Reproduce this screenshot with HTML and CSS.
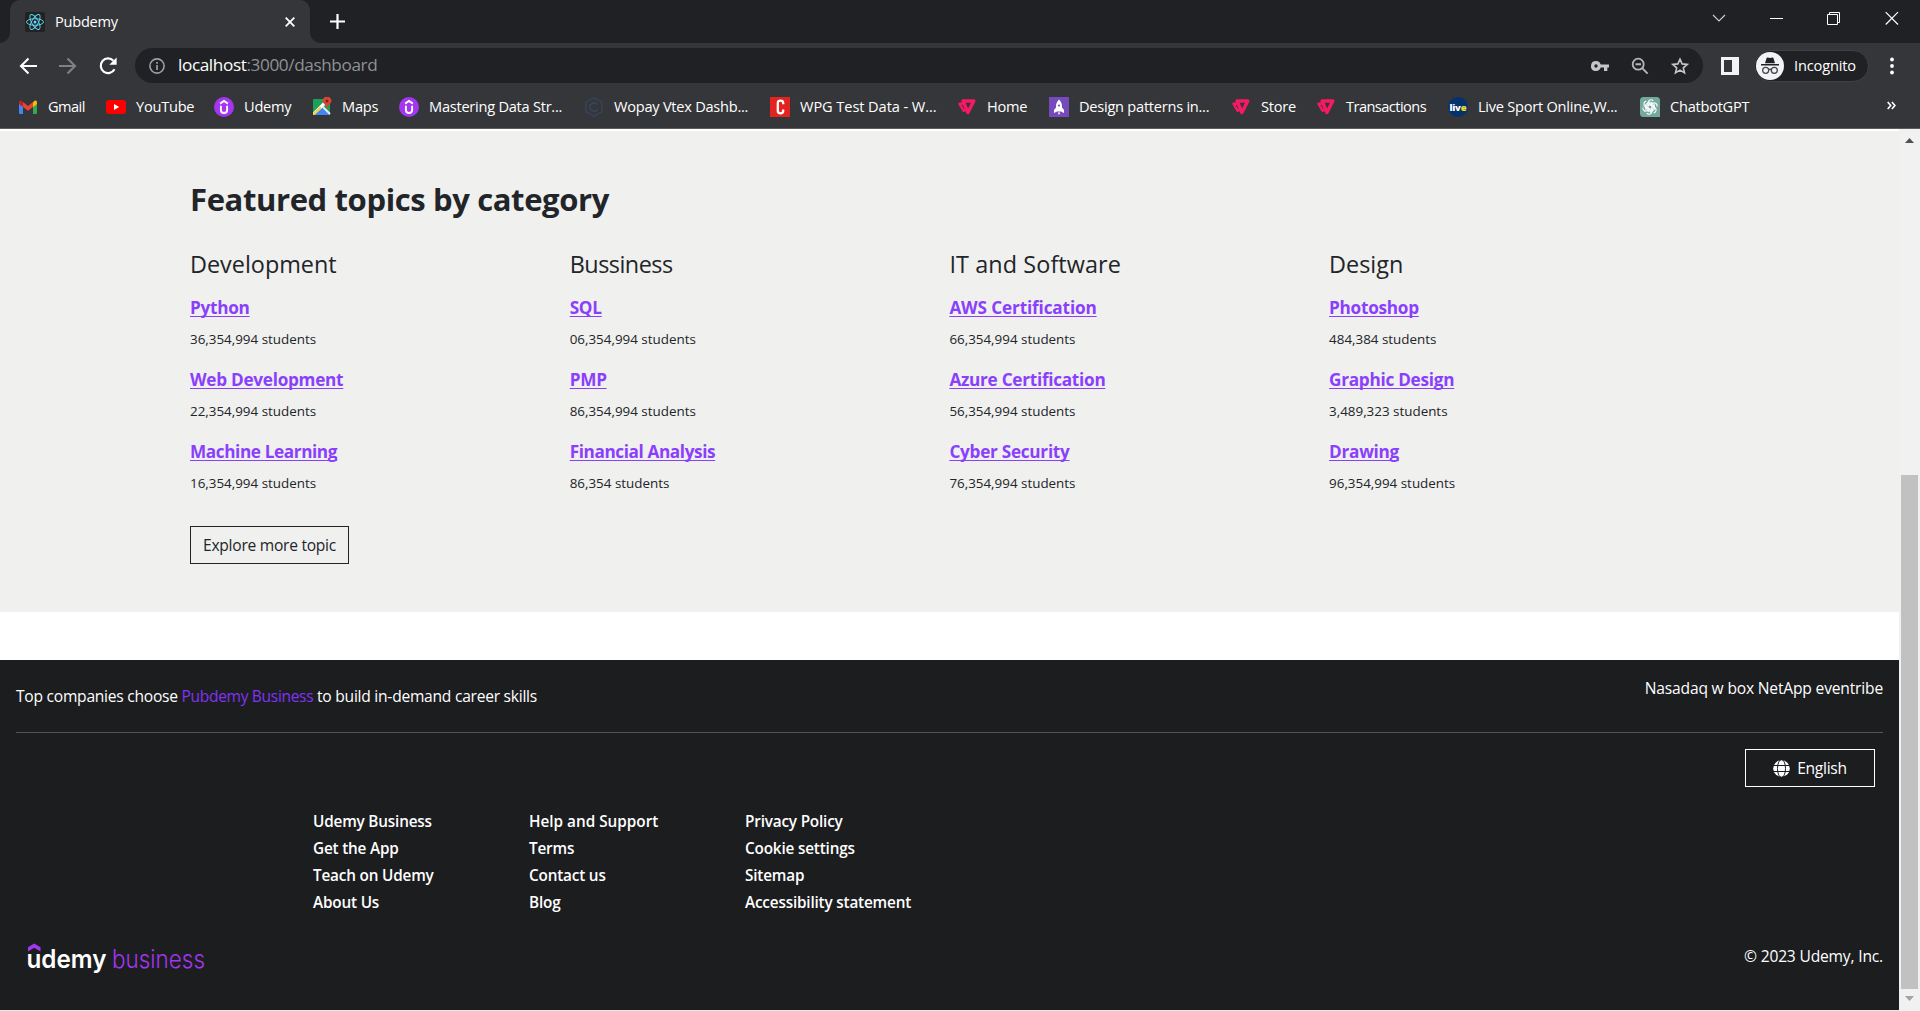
FILE: index.html
```
<!DOCTYPE html>
<html lang="en">
<head>
<meta charset="utf-8">
<title>Pubdemy</title>
<link rel="stylesheet" href="styles.css">
</head>
<body>
<svg class="defs" width="0" height="0">
  <symbol id="udemy" viewBox="0 0 20 20"><circle cx="10" cy="10" r="10" fill="#a435f0"/><path d="M6.100 6.600 10 4l3.900 2.600M6.900 8.800v4.100a3.100 3.100 0 0 0 6.200 0V8.800" fill="none" stroke="#fff" stroke-width="1.900"/></symbol>
  <symbol id="vtex" viewBox="0 0 20 20"><g fill="none" stroke="#f71963" stroke-linejoin="round" stroke-linecap="round"><path d="M6 4h10.800l-5.900 11.500z" stroke-width="3.400"/><path d="M5 6.800H2.500l4.200 7 1.500-.8" stroke-width="2.400"/></g></symbol>
</svg>

<header class="browser">
  <div class="tabstrip">
    <div class="tab">
      <svg class="favicon" viewBox="0 0 20 20"><rect width="20" height="20" rx="1.500" fill="#222"/><g fill="none" stroke="#61dafb" stroke-width=".9"><ellipse cx="10" cy="10" rx="8.500" ry="3.300"/><ellipse cx="10" cy="10" rx="8.500" ry="3.300" transform="rotate(60 10 10)"/><ellipse cx="10" cy="10" rx="8.500" ry="3.300" transform="rotate(120 10 10)"/></g><circle cx="10" cy="10" r="1.500" fill="#61dafb"/></svg>
      <span class="tab-title">Pubdemy</span>
      <svg class="tab-close" viewBox="0 0 10 10"><path d="M.7.7l8.600 8.600M9.300.7.7 9.300" stroke="#fff" stroke-width="1.800"/></svg>
    </div>
    <svg class="new-tab" viewBox="0 0 15 15"><path d="M7.500 0v15M0 7.500h15" stroke="#fff" stroke-width="2.200"/></svg>
    <div class="window-controls">
      <svg viewBox="0 0 14 14"><path d="M1 4l6 6 6-6" fill="none" stroke="#d0d0d1" stroke-width="1.100"/></svg>
      <svg viewBox="0 0 14 14"><path d="M0 7.500h13" stroke="#fff"/></svg>
      <svg viewBox="0 0 14 14"><path d="M.5 3.500h10v10H.5zM2.500 3.500v-2h10v10h-2" fill="none" stroke="#fff"/></svg>
      <svg viewBox="0 0 14 14"><path d="M.7 1.200l12.300 12.300M13 1.200.7 13.500" stroke="#fff" stroke-width="1.200"/></svg>
    </div>
  </div>

  <div class="toolbar">
    <div class="nav-buttons">
      <svg viewBox="0 0 20 20"><path d="M19 10H3M10.500 2.500 3 10l7.500 7.500" fill="none" stroke="#fff" stroke-width="2.100"/></svg>
      <svg viewBox="0 0 20 20"><path d="M1 10h16M9.500 2.500 17 10l-7.500 7.500" fill="none" stroke="#808184" stroke-width="2.100"/></svg>
      <svg viewBox="0 0 20 20"><path d="M16.500 13.200A7.300 7.300 0 1 1 15.400 4.800" fill="none" stroke="#fff" stroke-width="2.200"/><path d="M18.600 1.500v7.300h-7.300z" fill="#fff"/></svg>
    </div>
    <div class="omnibox">
      <svg class="info" viewBox="0 0 16 16"><circle cx="8" cy="8" r="7.100" fill="none" stroke="#9aa0a6" stroke-width="1.600"/><path d="M8 7v5M8 4v1.800" stroke="#9aa0a6" stroke-width="1.700"/></svg>
      <span class="url">localhost<span class="url-rest">:3000/dashboard</span></span>
      <div class="omni-actions">
        <svg viewBox="0 0 18 18"><path d="M5 4a5 5 0 1 0 4.700 6.600H13v3.300h3.300v-3.300H18V7.400H9.700A5 5 0 0 0 5 4Zm0 3.300a1.700 1.700 0 1 1 0 3.400 1.700 1.700 0 0 1 0-3.400Z" fill="#c4c5c7" fill-rule="evenodd"/></svg>
        <svg viewBox="0 0 18 18"><circle cx="7.200" cy="7.200" r="5.500" fill="none" stroke="#b5b6b8" stroke-width="1.800"/><path d="M4.500 7.200H10M11.200 11.200l5.400 5.400" stroke="#b5b6b8" stroke-width="1.900"/></svg>
        <svg viewBox="0 0 18 18"><path d="M9 2.200l2.100 4.700 5.100.5-3.900 3.400 1.200 5L9 13.100l-4.500 2.700 1.200-5-3.900-3.400 5.100-.5z" fill="none" stroke="#c4c5c7" stroke-width="1.600"/></svg>
      </div>
    </div>
    <svg class="side-panel" viewBox="0 0 18 18"><path d="M0 0h18v18H0zM3 3v12h8V3z" fill="#f1f3f4" fill-rule="evenodd"/></svg>
    <div class="profile">
      <svg viewBox="0 0 28 28"><circle cx="14" cy="14" r="14" fill="#f1f3f4"/><path d="M9 11.200 10.600 6q.4-.8 1.200-.5l2.200.5 2.200-.5q.8-.3 1.200.5L19 11.200zM5 12h18v1.500H5z" fill="#202124"/><g fill="none" stroke="#45474a" stroke-width="1.300"><circle cx="9.700" cy="18.300" r="3"/><circle cx="18.300" cy="18.300" r="3"/><path d="M12.500 17.700q1.500-.9 3 0"/></g></svg>
      <span>Incognito</span>
    </div>
    <svg class="menu-dots" viewBox="0 0 4 18"><g fill="#fff"><circle cx="2" cy="2.500" r="1.900"/><circle cx="2" cy="9" r="1.900"/><circle cx="2" cy="15.500" r="1.900"/></g></svg>
  </div>

  <nav class="bookmarks">
    <a class="tight"><svg viewBox="0 0 20 20"><path fill="#4285f4" d="M1 6l4 3v8H2.300Q1 17 1 15.700z"/><path fill="#34a853" d="M19 6l-4 3v8h2.700q1.300 0 1.300-1.300z"/><path fill="#fbbc04" d="M15 5.200 16.200 4Q19 2.600 19 5.500V7l-4 3z"/><path fill="#c5221f" d="M5 5.200 3.800 4Q1 2.600 1 5.500V7l4 3z"/><path fill="#ea4335" d="M5 5l5 4 5-4v5l-5 3.800L5 10z"/></svg>Gmail</a>
    <a><svg viewBox="0 0 20 20"><rect y="3" width="20" height="14" rx="3" fill="#f00"/><path d="M8 7l5.200 3L8 13z" fill="#fff"/></svg>YouTube</a>
    <a><svg><use href="#udemy"/></svg>Udemy</a>
    <a><svg viewBox="0 0 20 20"><rect x="1" y="2" width="17" height="16" rx="1" fill="#1da05a"/><path d="M1.500 18 10 9.500 18 17.500V18z" fill="#4285f4"/><path d="M1 15.500 14.500 2H18v1.500L2.500 18H1z" fill="#fff"/><path d="M1 16.500 8 9.500l1.500 1.500L2.500 18H1z" fill="#fbcf2b"/><path d="M10.500 9.500 18 17" stroke="#e8eaed" stroke-width="2"/><path d="M14.700 12Q14.400 8.500 12 6.700a4.200 4.200 0 1 1 6 0Q15.300 8.500 14.700 12z" fill="#db4437"/><circle cx="15" cy="4" r="1.500" fill="#7b231b"/></svg>Maps</a>
    <a><svg><use href="#udemy"/></svg>Mastering Data Str...</a>
    <a><svg viewBox="0 0 20 20"><g fill="none" stroke="#35445a" stroke-width="1.500"><path d="M10 .8 18 5.400v9.200l-8 4.600-8-4.600V5.400z"/><path d="M13.500 7.500a4.200 4.200 0 1 0 0 5" stroke-width="1.900"/></g></svg>Wopay Vtex Dashb...</a>
    <a class="loose"><svg viewBox="0 0 20 20"><rect width="20" height="20" fill="#e2231f"/><path d="M13.200 7.300V6q0-2.300-2.700-2.300T7.800 6v8q0 2.300 2.700 2.300T13.200 14v-1.500" fill="none" stroke="#fff" stroke-width="2.300"/></svg>WPG Test Data - W...</a>
    <a><svg><use href="#vtex"/></svg>Home</a>
    <a><svg viewBox="0 0 20 20"><rect width="20" height="20" fill="#764abc"/><path d="M10 2.500q3.300 3 3 8l2 2.500v3l-3-1.500H8L5 16v-3l2-2.500q-.3-5 3-8zM8.700 15.500h2.600L10 18z" fill="#fff"/><circle cx="10" cy="8.500" r="1.100" fill="#764abc"/></svg>Design patterns in...</a>
    <a><svg><use href="#vtex"/></svg>Store</a>
    <a class="tight"><svg><use href="#vtex"/></svg>Transactions</a>
    <a><svg viewBox="0 0 20 20"><circle cx="10" cy="10" r="10" fill="#05316f"/><text x="1.500" y="13.700" textLength="17" class="live">liv<tspan fill="#f5e11d">e</tspan></text></svg>Live Sport Online,W...</a>
    <a><svg viewBox="0 0 20 20"><path d="M3.500 0h13Q20 0 20 3.500V20H3.500Q0 20 0 16.500v-13Q0 0 3.500 0z" fill="#74aa9c"/><g fill="none" stroke="#fff" stroke-width="1.100"><path id="petal" d="M8 9V5.700a3 3 0 0 1 5.200-1.900"/><use href="#petal" transform="rotate(60 10 10)"/><use href="#petal" transform="rotate(120 10 10)"/><use href="#petal" transform="rotate(180 10 10)"/><use href="#petal" transform="rotate(240 10 10)"/><use href="#petal" transform="rotate(300 10 10)"/><path id="bar" d="M8 11.200V7.500l3.300-1.900 3.400 2"/><use href="#bar" transform="rotate(60 10 10)"/><use href="#bar" transform="rotate(120 10 10)"/><use href="#bar" transform="rotate(180 10 10)"/><use href="#bar" transform="rotate(240 10 10)"/><use href="#bar" transform="rotate(300 10 10)"/></g></svg>ChatbotGPT</a>
    <svg class="more" viewBox="0 0 9 9"><path d="M.7 1l3 3.500-3 3.500M4.900 1l3 3.500-3 3.500" fill="none" stroke="#fff" stroke-width="1.600"/></svg>
  </nav>
</header>

<div class="viewport">
  <div class="page">
    <section class="topics">
      <h1>Featured topics by category</h1>
      <div class="topic-columns">
        <div class="topic-column">
          <h2>Development</h2>
          <a>Python</a><p>36,354,994 students</p>
          <a>Web Development</a><p>22,354,994 students</p>
          <a class="snug-link">Machine Learning</a><p>16,354,994 students</p>
        </div>
        <div class="topic-column">
          <h2 class="snug">Bussiness</h2>
          <a>SQL</a><p>06,354,994 students</p>
          <a>PMP</a><p>86,354,994 students</p>
          <a class="snug-link">Financial Analysis</a><p>86,354 students</p>
        </div>
        <div class="topic-column">
          <h2 class="wide">IT and Software</h2>
          <a class="wide-link">AWS Certification</a><p>66,354,994 students</p>
          <a>Azure Certification</a><p>56,354,994 students</p>
          <a>Cyber Security</a><p>76,354,994 students</p>
        </div>
        <div class="topic-column">
          <h2>Design</h2>
          <a>Photoshop</a><p>484,384 students</p>
          <a>Graphic Design</a><p>3,489,323 students</p>
          <a>Drawing</a><p>96,354,994 students</p>
        </div>
      </div>
      <button class="explore">Explore more topic</button>
    </section>

    <footer class="footer">
      <div class="companies">
        <p class="pitch">Top companies choose <span>Pubdemy Business</span> to build in-demand career skills</p>
        <p class="partners">Nasadaq w box NetApp eventribe</p>
      </div>
      <button class="language">
        <svg viewBox="0 0 17 17"><circle cx="8.500" cy="8.500" r="8.300" fill="#fff"/><g fill="none" stroke="#1c1d1f"><ellipse cx="8.500" cy="8.500" rx="4" ry="9"/><path d="M0 5.500h17M0 11.500h17"/></g></svg>
        <span>English</span>
      </button>
      <div class="links">
        <ul><li>Udemy Business</li><li>Get the App</li><li>Teach on Udemy</li><li>About Us</li></ul>
        <ul><li class="support">Help and Support</li><li>Terms</li><li>Contact us</li><li>Blog</li></ul>
        <ul><li>Privacy Policy</li><li>Cookie settings</li><li>Sitemap</li><li>Accessibility statement</li></ul>
      </div>
      <div class="legal">
        <svg class="logo" viewBox="0 0 220 40">
          <path d="M1 7.200 7.200 3.500l6.300 3.700v4.200L7.200 7.800 1 11.400z" fill="#a435f0"/>
          <text x="-.5" y="27.600" textLength="80" lengthAdjust="spacingAndGlyphs" class="logo-name">udemy</text>
          <text x="85" y="27.600" textLength="93" lengthAdjust="spacingAndGlyphs" class="logo-business">business</text>
        </svg>
        <p>© 2023 Udemy, Inc.</p>
      </div>
    </footer>
  </div>
  <div class="scrollbar">
    <svg viewBox="0 0 9 5"><path d="M0 5 4.500 0 9 5z" fill="#505050"/></svg>
    <div class="thumb"></div>
    <svg viewBox="0 0 9 5"><path d="M0 0h9L4.500 5z" fill="#a3a3a3"/></svg>
  </div>
</div>
</body>
</html>
```
FILE: styles.css
```
* { box-sizing: border-box; }
body, h1, h2, p, ul { margin: 0; padding: 0; }
body {
  height: 1011px;
  display: flex;
  flex-direction: column;
  overflow: hidden;
  background: #fff;
  color: #212529;
  font-family: "Open Sans", "Noto Sans", sans-serif;
}
svg { display: block; flex: none; }
.defs { position: absolute; }

/* Browser chrome */
.browser {
  flex: none;
  background: #35363a;
  color: #fff;
  border-bottom: 1px solid #5c5c5f;
  font-size: 14.6px;
  letter-spacing: -.25px;
}
.tabstrip {
  display: flex;
  height: 43px;
  padding-left: 10px;
  background: #202124;
}
.tab {
  display: flex;
  align-items: center;
  width: 300px;
  padding: 0 15px;
  border-radius: 10px 10px 0 0;
  background: #35363a;
  position: relative;
}
.tab::before, .tab::after {
  content: "";
  position: absolute;
  bottom: 0;
  width: 10px;
  height: 10px;
}
.tab::before { left: -10px; background: radial-gradient(circle at 0 0, transparent 9.5px, #35363a 10px); }
.tab::after { right: -10px; background: radial-gradient(circle at 100% 0, transparent 9.5px, #35363a 10px); }
.favicon { width: 20px; height: 20px; margin-right: 10px; }
.tab-title { flex: 1; line-height: 20px; margin-top: -2px; }
.tab-close { width: 10px; height: 10px; }
.new-tab { width: 15px; height: 15px; margin: 14px 0 0 20px; }
.window-controls {
  display: flex;
  gap: 43.5px;
  margin: 11px 21.5px 0 auto;
}
.window-controls svg { width: 14px; height: 14px; }

.toolbar {
  display: flex;
  align-items: center;
  height: 45px;
}
.nav-buttons {
  display: flex;
  gap: 20px;
  width: 135px;
  padding-left: 18px;
}
.nav-buttons svg { width: 20px; height: 20px; }
.omnibox {
  display: flex;
  align-items: center;
  width: 1568px;
  height: 35px;
  padding: 0 14px;
  border-radius: 18px;
  background: #202124;
}
.info { width: 16px; height: 16px; margin-right: 13px; }
.url { flex: 1; font-size: 17.2px; letter-spacing: -.4px; line-height: 24px; margin-top: -1px; }
.url-rest { color: #8e9195; }
.omni-actions { display: flex; gap: 22px; }
.omni-actions svg { width: 18px; height: 18px; }
.side-panel { width: 18px; height: 18px; margin: 0 15px 0 18px; }
.profile {
  display: flex;
  align-items: center;
  gap: 10px;
  width: 115px;
  height: 32px;
  padding-left: 1px;
  border: 1px solid #404145;
  border-radius: 16px;
  background: #202124;
}
.profile svg { width: 28px; height: 28px; }
.profile span { margin-top: -2px; letter-spacing: -.15px; }
.menu-dots { width: 4px; height: 18px; margin-left: 21px; }

.bookmarks {
  display: grid;
  grid-template-columns: 88px 108px 98px 87px 185px 186px 187px 92px 182px 85px 132px 192px 247px 9px;
  align-items: center;
  height: 40px;
  padding: 0 0 5px 18px;
}
.bookmarks a { display: flex; align-items: center; line-height: 20px; white-space: nowrap; }
.bookmarks a svg { width: 20px; height: 20px; margin: 2px 10px 0 0; }
.bookmarks .tight { letter-spacing: -.55px; }
.bookmarks .loose { letter-spacing: -.08px; }
.bookmarks .more { width: 9px; height: 9px; }
.live { font-size: 9.5px; font-weight: 800; fill: #fff; letter-spacing: 0; }

/* Page */
.viewport { flex: 1; display: flex; min-height: 0; }
.page { flex: 1; padding-top: 2px; border-bottom: 1px solid #e8e8e8; }
.topics {
  height: 481px;
  margin-bottom: 48px;
  padding: 48px 0 0 190px;
  background: #f0f0ee;
}
.topics h1 {
  font-size: 31px;
  font-weight: 700;
  line-height: 40px;
  letter-spacing: -.38px;
  margin-bottom: 30px;
}
.topic-columns { display: grid; grid-template-columns: repeat(4, 379.7px); }
.topic-column { display: flex; flex-direction: column; align-items: flex-start; }
.topic-column h2 {
  font-size: 23.4px;
  font-weight: 400;
  line-height: 30px;
  letter-spacing: 0;
  margin-bottom: 15px;
}
.topic-column .snug { letter-spacing: -.5px; }
.topic-column .wide { letter-spacing: .1px; }
.topic-column a {
  color: #8a3ffc;
  font-size: 17.2px;
  font-weight: 700;
  line-height: 28px;
  letter-spacing: -.28px;
  text-decoration: underline;
  text-decoration-thickness: 1px;
  text-underline-offset: 2px;
  text-decoration-skip-ink: none;
}
.topic-column .snug-link { letter-spacing: -.4px; }
.topic-column .wide-link { letter-spacing: -.15px; }
.topic-column p {
  font-size: 13.4px;
  line-height: 24px;
  margin: 5px 0 15px;
}
button {
  display: flex;
  align-items: center;
  justify-content: center;
  height: 38px;
  padding: 0;
  background: none;
  font: 15.6px "Open Sans", "Noto Sans", sans-serif;
  letter-spacing: -.27px;
}
.explore {
  width: 159px;
  margin-top: 16px;
  border: 1px solid #212529;
  color: #212529;
}

/* Footer */
.footer {
  display: flex;
  flex-direction: column;
  height: 350px;
  padding: 0 16px;
  background: #1c1d1f;
  color: #fff;
  font-size: 15.6px;
  line-height: 24px;
  letter-spacing: -.25px;
}
.companies {
  display: flex;
  justify-content: space-between;
  height: 73px;
  padding-top: 16px;
  border-bottom: 1px solid #535455;
}
.pitch { padding-top: 8px; }
.pitch span { color: #8133f5; letter-spacing: -.35px; }
.partners { letter-spacing: -.18px; }
.language {
  align-self: flex-end;
  gap: 7px;
  width: 130px;
  margin: 16px 8px 21px 0;
  border: 1px solid #fff;
  color: #fff;
}
.language svg { width: 17px; height: 17px; }
.links {
  display: grid;
  grid-template-columns: repeat(3, 216px);
  padding-left: 297px;
  font-size: 15.3px;
  font-weight: 600;
  line-height: 27px;
  letter-spacing: -.18px;
}
.links ul { list-style: none; }
.links .support { letter-spacing: 0; }
.legal { display: flex; justify-content: space-between; padding-top: 24px; }
.legal p { padding-top: 4px; letter-spacing: -.18px; }
.logo { width: 220px; height: 40px; margin-left: 11px; letter-spacing: 0; }
.logo-name { font: 600 25.5px Inter, sans-serif; fill: #fff; }
.logo-business { font: 300 25.5px Inter, sans-serif; fill: #a435f0; }

.scrollbar {
  display: flex;
  flex-direction: column;
  align-items: center;
  width: 21px;
  padding: 9px 0 10px;
  background: #f1f1f1;
}
.scrollbar svg { width: 9px; height: 5px; }
.thumb { width: 17px; height: 514px; margin: auto 0 7px; background: #c1c1c1; }
```
